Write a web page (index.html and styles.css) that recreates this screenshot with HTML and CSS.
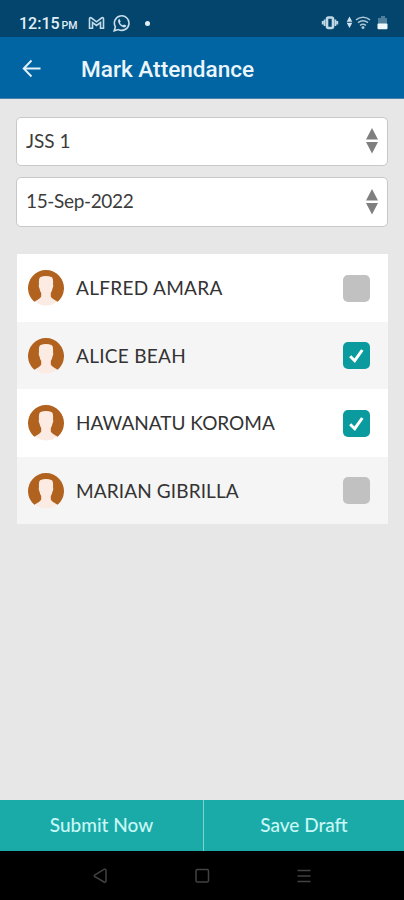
FILE: index.html
```html
<!DOCTYPE html>
<html lang="en">
<head>
<meta charset="utf-8">
<title>Mark Attendance</title>
<link rel="stylesheet" href="styles.css">
</head>
<body>
<svg width="0" height="0" class="defs" aria-hidden="true">
  <symbol id="avatar" viewBox="0 0 36 36">
    <circle cx="18" cy="18" r="17.500" fill="#fbebe2"/>
    <path d="M6.300 31.800A18 18 0 1 1 29.700 31.800Q24 28.800 22.800 26.500V23Q24 21.500 24.500 18.500Q25.700 16.500 25 14Q25.500 9 24 7.200Q18 4.800 12 7.200Q10.500 9 11 14Q10.300 16.500 11.500 18.500Q12 21.500 13.200 23V26.500Q12 28.800 6.300 31.800Z" fill="#b0621e"/>
  </symbol>
  <symbol id="sorter" viewBox="0 0 12 26">
    <path d="M6 0L12 11.500H0ZM0 14H12L6 25.500Z" fill="#7f7f7f"/>
  </symbol>
  <symbol id="check" viewBox="0 0 27 27">
    <path d="M7.200 14.300L11.700 18.700L19.300 8" fill="none" stroke="#fff" stroke-width="3"/>
  </symbol>
</svg>
<div class="screen">
  <div class="status">
    <span class="time">12:15</span><span class="pm">PM</span>
    <svg class="mail" width="17" height="14" viewBox="0 0 17 14"><path d="M1.500 12.300V3Q1.500 1 3.500 2L8.500 5.800L13.500 2Q15.500 1 15.500 3V12.300H12.500V6.500L8.500 9.500L4.500 6.500V12.300Z" fill="none" stroke="#c4dcea" stroke-width="1.600"/></svg>
    <svg class="chat" width="18" height="18" viewBox="0 0 18 18"><path d="M1.200 16.800L2.400 12.800A7.300 7.300 0 1 1 5.400 15.600Z" fill="none" stroke="#c9dfed" stroke-width="1.600"/><path d="M6.400 4.800L7.700 7.500L6.900 8.700Q8 10.700 10 11.300L11 10.400L13.400 11.600Q12.700 14 10.200 13.300Q5.900 11.800 5 7.300Q4.900 5.400 6.400 4.800Z" fill="#c9dfed"/></svg>
    <span class="dot"></span>
    <svg class="system" width="68" height="16" viewBox="0 0 68 16">
      <g fill="none" stroke="#c1d8e6" stroke-width="1.800"><rect x="6" y="2.500" width="6" height="10.500" rx="1.500" stroke-width="2.600"/><path d="M3.600 4.500V11M1.700 6V9.500M14.400 4.500V11M16.300 6V9.500"/></g>
      <path d="M28.500 1.500L31.300 6.800H25.700ZM25.700 7.800H31.300L28.500 13Z" fill="#cfe2ee"/>
      <g fill="none" stroke="#a9c5d6" stroke-width="1.500"><path d="M35 4.800Q42 -.5 49 4.800M37 7.700Q42 3.700 47 7.700M39 10.300Q42 8.200 45 10.300"/></g><circle cx="42" cy="12.600" r="1.500" fill="#a9c5d6"/>
      <path d="M58 3H60V1H64V3H66V9H57V3Z" fill="#4f7f9d"/><rect x="56.500" y="8.500" width="10" height="5.700" rx="1" fill="#f1f8fc"/>
    </svg>
  </div>
  <header class="bar">
    <svg width="20" height="20" viewBox="0 0 20 20"><path d="M18.500 9.500H2M9.500 1.500L1.700 9.500L9.500 17.500" fill="none" stroke="#e3f1fa" stroke-width="1.900"/></svg>
    <h1>Mark Attendance</h1>
  </header>
  <main>
    <div class="select first"><span>JSS 1</span><svg width="12" height="26"><use href="#sorter"/></svg></div>
    <div class="select"><span class="date">15-Sep-2022</span><svg width="12" height="26"><use href="#sorter"/></svg></div>
    <ul class="list">
      <li><svg width="36" height="36"><use href="#avatar"/></svg><span class="spaced">ALFRED AMARA</span><i class="box"></i></li>
      <li><svg width="36" height="36"><use href="#avatar"/></svg><span class="spaced">ALICE BEAH</span><i class="box on"><svg width="27" height="27"><use href="#check"/></svg></i></li>
      <li><svg width="36" height="36"><use href="#avatar"/></svg><span>HAWANATU KOROMA</span><i class="box on"><svg width="27" height="27"><use href="#check"/></svg></i></li>
      <li><svg width="36" height="36"><use href="#avatar"/></svg><span class="loose">MARIAN GIBRILLA</span><i class="box"></i></li>
    </ul>
  </main>
  <div class="actions"><span class="act"><b>Submit Now</b></span><span class="act"><b>Save Draft</b></span></div>
  <nav class="nav">
    <svg width="16" height="16" viewBox="0 0 16 16"><path d="M2.500 7.200L12 1.400Q14 .8 14 2.800V12.800Q14 14.800 12 14L2.500 8.500Q1.800 7.800 2.500 7.200Z"/></svg>
    <svg width="16" height="16" viewBox="0 0 16 16"><rect x="2" y="1.500" width="12.500" height="12.500" rx="1.500"/></svg>
    <svg width="16" height="16" viewBox="0 0 16 16"><path d="M1.500 2.500H14.500M1.500 8H14.500M1.500 13.500H14.500"/></svg>
  </nav>
</div>
</body>
</html>
```
FILE: styles.css
```css
* { box-sizing: border-box; }
body { margin: 0; font-family: Lato, "Liberation Sans", sans-serif; }
.defs { display: none; }
.screen { width: 404px; height: 900px; display: flex; flex-direction: column; background: #e7e7e7; overflow: hidden; }
svg { flex: none; display: block; }
span, b { white-space: nowrap; }
.status { height: 37px; flex: none; background: #03456c; display: flex; align-items: center; padding: 9px 15px 0 19px; color: #e2eff7; font-family: Roboto, sans-serif; }
.time { font-size: 16px; font-weight: 500; margin-top: 1px; }
.pm { font-size: 10.5px; font-weight: 500; margin: 4px 0 0 2px; }
.mail { margin-left: 11px; }
.chat { margin-left: 8px; }
.dot { width: 5px; height: 5px; border-radius: 50%; background: #e2eff7; margin-left: 14px; }
.system { margin-left: auto; }
.bar { height: 62px; flex: none; background: #0065a2; display: flex; align-items: center; padding: 2px 0 0 22px; border-bottom: 1px solid #4b82a9; }
.bar h1 { margin: 2px 0 0 39px; font: 500 22.6px/28px Roboto, sans-serif; color: #ebf5fb; }
main { flex: 1; padding: 18px 16px 0; }
.select { height: 50px; background: #fff; border: 1px solid #c8c8c8; border-radius: 5px; display: flex; align-items: center; justify-content: space-between; padding: 0 9px 3px 9px; font-size: 19px; color: #3c3c3c; }
.select.first { height: 49px; margin-bottom: 11px; }
.select svg { margin-top: 2px; }
.date { letter-spacing: -.35px; }
.list { list-style: none; margin: 27px 0 0 1px; padding: 0; width: 371px; }
.list li { height: 67.5px; background: #fff; display: flex; align-items: center; padding: 1px 18px 0 11px; font-size: 19px; color: #333; }
.list li:nth-child(even) { background: #f5f5f5; }
.list span { margin: -1px 0 0 12px; }
.list .spaced { letter-spacing: .3px; }
.list .loose { letter-spacing: .12px; }
.box { width: 27px; height: 27px; border-radius: 5px; background: #c1c1c1; margin-left: auto; }
.box.on { background: #0b9a9d; }
.actions { height: 51px; flex: none; display: grid; grid-template-columns: 203px 1fr; background: #1aaba8; }
.act { display: flex; align-items: center; justify-content: center; color: #c8f7f6; font-size: 19px; padding-bottom: 2px; }
.act + .act { border-left: 1px solid #7ed3d1; }
.act b { font-weight: 500; }
.nav { height: 49px; flex: none; background: #000; display: flex; justify-content: center; gap: 86px; padding-top: 17px; }
.nav svg { fill: none; stroke: #424242; stroke-width: 1.500; }
```
